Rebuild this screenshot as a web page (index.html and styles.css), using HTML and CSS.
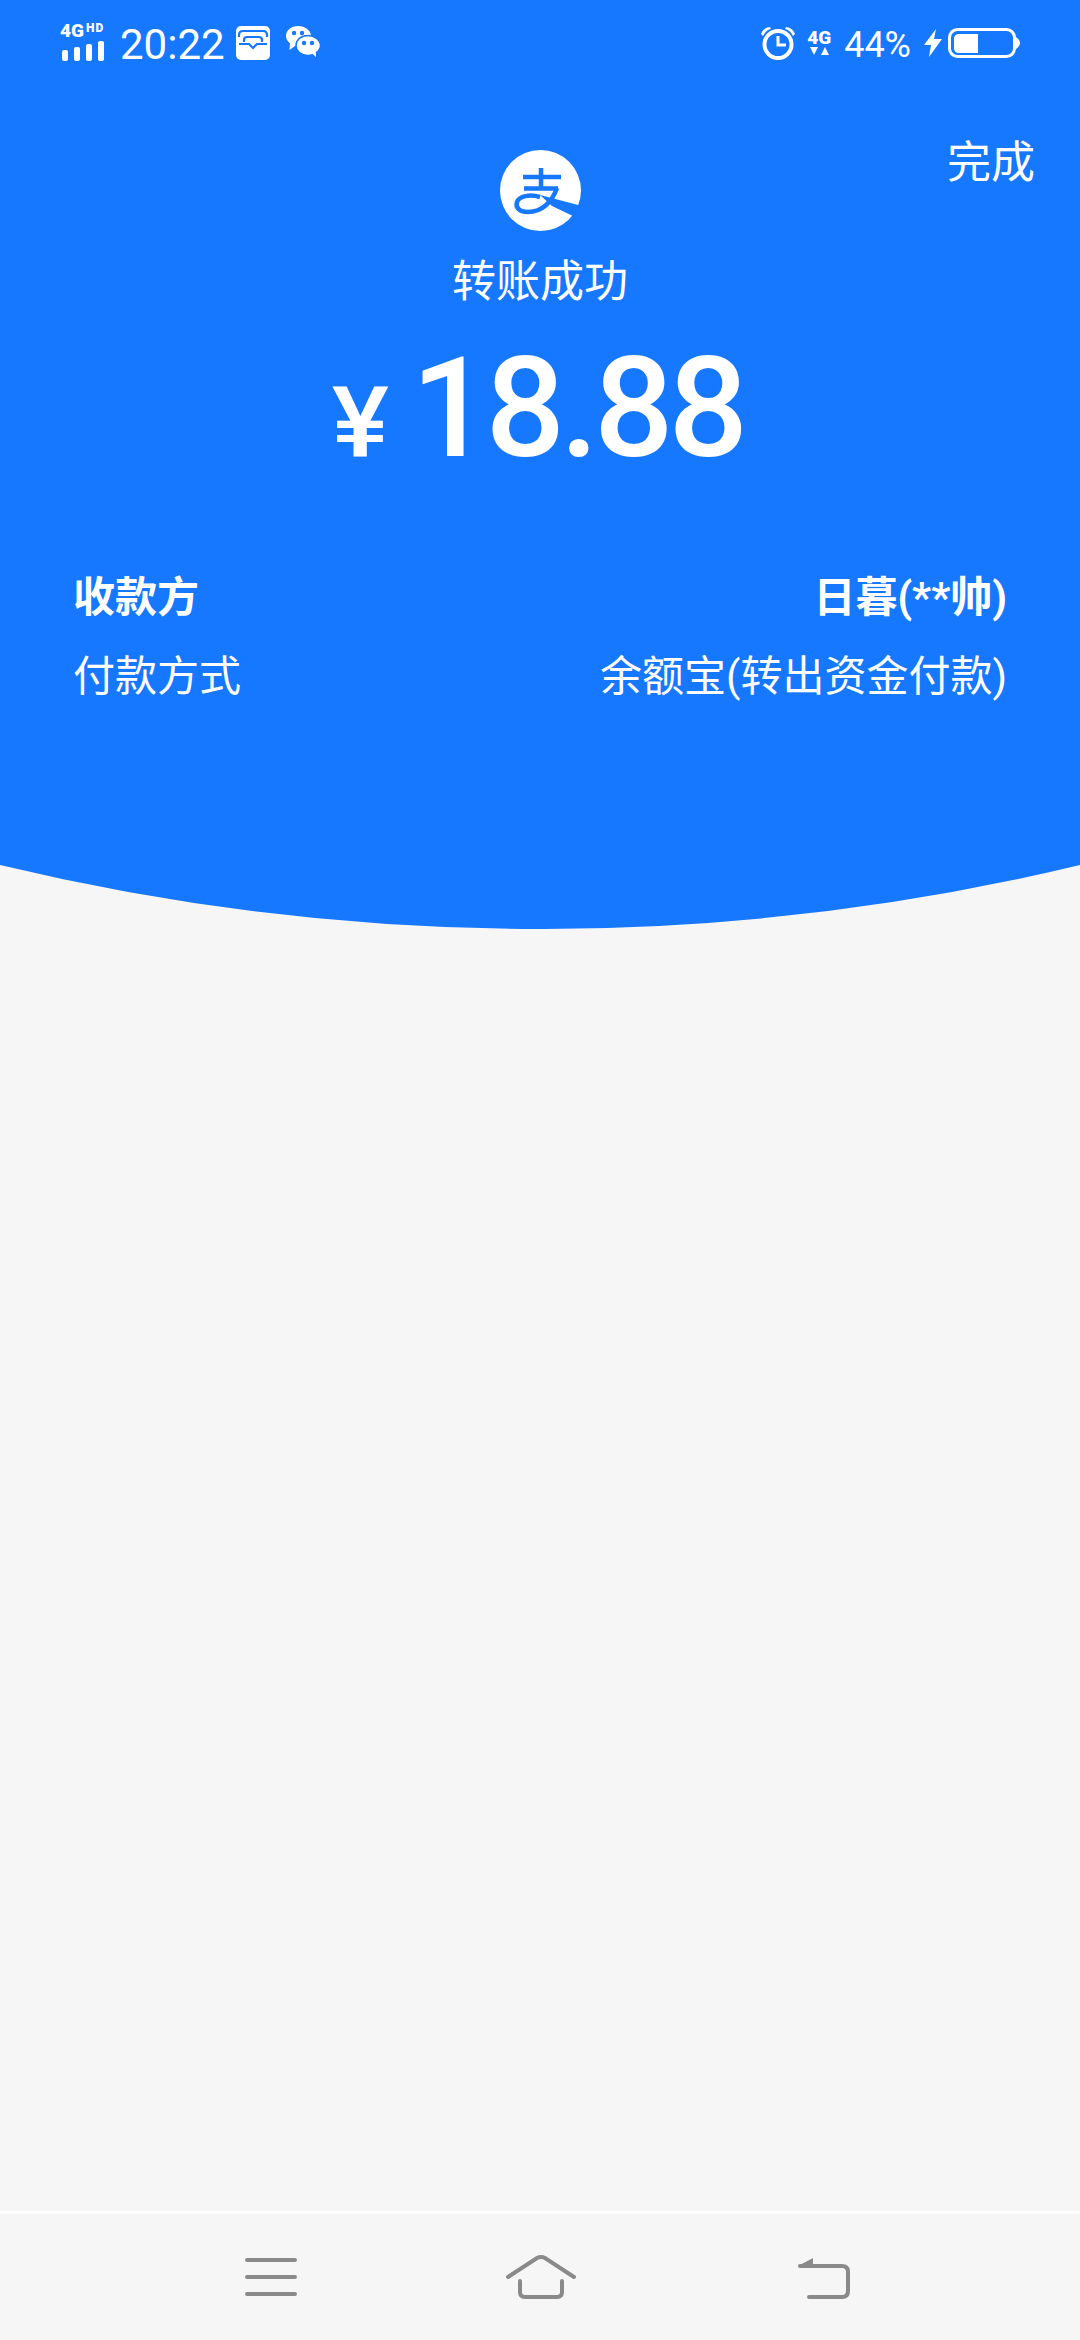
FILE: index.html
```html
<!DOCTYPE html>
<html lang="zh-CN">
<head>
    <meta charset="UTF-8">
    <meta name="viewport" content="width=device-width, initial-scale=1.0">
    <title>转账成功</title>
    <link rel="stylesheet" href="styles.css">
</head>
<body>
    <main class="page">
        <section class="hero">
            <div class="status-bar">
                <div class="signal">
                    <div class="sig-top"><span class="sig-4g">4G</span><span class="sig-hd">HD</span></div>
                    <svg viewBox="0 0 46 20" width="46" height="20">
                        <rect x="2" y="9" width="6" height="11" rx="2"/>
                        <rect x="14" y="6" width="6" height="14" rx="2"/>
                        <rect x="26" y="3" width="6" height="17" rx="2"/>
                        <rect x="38" y="0" width="6" height="20" rx="2"/>
                    </svg>
                </div>
                <span class="status-time">20:22</span>
                <svg class="ic-inbox" viewBox="0 0 34 34" width="34" height="34">
                    <rect width="34" height="34" rx="5" fill="#fff"/>
                    <path d="M3 11V9Q3 5 7 5H27Q31 5 31 9V11M8 16V14Q8 11 11 11H23Q26 11 26 14V16" fill="none" stroke="#1677ff" stroke-width="2.200"/>
                    <path d="M3 18H13L17 22L21 18H31" fill="none" stroke="#1677ff" stroke-width="2.200"/>
                </svg>
                <svg class="ic-wechat" viewBox="0 0 36 36" width="36" height="36">
                    <path d="M13 1C6 1 1 5.500 1 11C1 14 2.500 16.500 5 18.300L4.500 25L10 21C11 21.100 12 21.100 13 21.100C20 21.100 26 16.500 26 11C26 5.500 20 1 13 1Z" fill="#fff"/>
                    <path d="M23 10.500C16 10.500 11 15 11 20.500C11 26 16 30.500 23 30.500C24.500 30.500 26 30.200 27.500 29.800L32 34L31.500 27.500C34 25.500 35.500 23 35.500 20.500C35.500 15 29 10.500 23 10.500Z" fill="#fff" stroke="#1677ff" stroke-width="1.500"/>
                    <circle cx="9" cy="8" r="2.200" fill="#1677ff"/>
                    <circle cx="17" cy="8" r="2.200" fill="#1677ff"/>
                    <circle cx="19" cy="18" r="2.200" fill="#1677ff"/>
                    <circle cx="27" cy="18" r="2.200" fill="#1677ff"/>
                </svg>
                <span class="status-spacer"></span>
                <svg class="ic-alarm" viewBox="0 0 34 34" width="34" height="34">
                    <circle cx="17" cy="18.500" r="13.500" fill="none" stroke="#fff" stroke-width="4"/>
                    <path d="M17 10V19H25" fill="none" stroke="#fff" stroke-width="3"/>
                    <path d="M0 8Q2 2 9 1L10 3Q5 4 2 10ZM34 8Q32 2 25 1L24 3Q29 4 32 10Z" fill="#fff"/>
                </svg>
                <div class="net">
                    <span class="sig-4g">4G</span>
                    <svg viewBox="0 0 24 9" width="24" height="9">
                        <path d="M3 0H11L7 8ZM14 8H22L18 0Z" fill="#fff"/>
                    </svg>
                </div>
                <span class="status-batt">44%</span>
                <svg class="ic-bolt" viewBox="0 0 18 28" width="18" height="28">
                    <path d="M12 0L0 16H7L5 28L18 10H10Z" fill="#fff"/>
                </svg>
                <svg class="ic-battery" viewBox="0 0 72 30" width="72" height="30">
                    <rect x="1.500" y="1.500" width="65" height="27" rx="8" fill="none" stroke="#fff" stroke-width="3"/>
                    <path d="M6 11Q6 6 11 6H30V25H11Q6 25 6 20Z" fill="#fff"/>
                    <path d="M68 9Q72 12 72 15Q72 18 68 21Z" fill="#fff"/>
                </svg>
            </div>

            <div class="top-row">
                <span></span>
                <div class="result">
                    <svg class="logo" viewBox="0 0 81 81" width="81" height="81">
                        <circle cx="40.500" cy="40.500" r="40.500" fill="#fff"/>
                        <path d="M23 27H61M41 18V38M24 38.500H58" fill="none" stroke="#1677ff" stroke-width="4.500"/>
                        <path d="M57 38C52 52 42 62 28 62C20 62 15 58 17 52C19 46 30 44 40 47" fill="none" stroke="#1677ff" stroke-width="4.500"/>
                        <path d="M40 45L82 56L75 67L52 56Z" fill="#1677ff"/>
                    </svg>
                    <div class="result-title">转账成功</div>
                </div>
                <a class="done">完成</a>
            </div>

            <div class="amount"><span class="amount-sign">¥</span><span class="amount-num">18.88</span></div>

            <dl class="details">
                <div class="detail-row detail-strong">
                    <dt>收款方</dt>
                    <dd>日暮(**帅)</dd>
                </div>
                <div class="detail-row">
                    <dt>付款方式</dt>
                    <dd>余额宝(转出资金付款)</dd>
                </div>
            </dl>
        </section>
        <svg class="curve" viewBox="0 0 1080 64" width="1080" height="64">
            <path d="M0 0H1080A2310 2310 0 0 1 0 0Z" fill="#1677ff"/>
        </svg>
    </main>

    <nav class="nav-bar">
        <svg class="nav-menu" viewBox="0 0 54 42" width="54" height="42">
            <path d="M3 4H51M3 21H51M3 38H51"/>
        </svg>
        <svg class="nav-home" viewBox="0 0 72 46" width="72" height="46">
            <path d="M3 23L32 4Q36 2 40 4L69 23"/>
            <path d="M15 27V38Q15 43 20 43H52Q57 43 57 38V27"/>
        </svg>
        <svg class="nav-back" viewBox="0 0 56 44" width="56" height="44">
            <path d="M4 10H46Q52 10 52 16V35Q52 41 46 41H13"/>
            <path class="nav-arrow" d="M2 10L17 2V11Z"/>
        </svg>
    </nav>
</body>
</html>
```

FILE: styles.css
```css
* { box-sizing: border-box; }
html, body { margin: 0; padding: 0; }
body { width: 1080px; height: 2340px; display: flex; flex-direction: column; background-color: #f6f6f6; color: #fff; font-family: Roboto, "Noto Sans CJK SC", sans-serif; }
svg { display: block; flex: none; }

.page { flex: 1; }
.hero { height: 865px; background-color: #1677ff; overflow: hidden; }

/* status bar */
.status-bar { display: flex; align-items: center; height: 38px; margin-top: 24px; padding-left: 60px; fill: #fff; }
.signal { display: flex; flex-direction: column; width: 48px; margin-top: -2px; }
.signal svg { margin-top: 2px; }
.sig-top { display: flex; gap: 2px; height: 16px; align-items: flex-start; }
.sig-4g { font-size: 19px; font-weight: 900; line-height: 16px; }
.sig-hd { font-size: 12px; font-weight: 900; line-height: 10px; letter-spacing: 1px; }
.status-time { margin-left: 12px; font-size: 42px; line-height: 38px; padding-top: 4px; }
.ic-inbox { margin-left: 11px; }
.ic-wechat { margin-left: 15px; }
.status-spacer { flex: 1; }
.ic-alarm { margin-right: 12px; }
.net { display: flex; flex-direction: column; align-items: center; width: 24px; margin-right: 13px; }
.net svg { margin-top: 1px; }
.status-batt { font-size: 36px; line-height: 38px; margin-right: 13px; padding-top: 4px; }
.ic-bolt { margin-right: 6px; }
.ic-battery { margin-right: 60px; }

/* title */
.top-row { display: grid; grid-template-columns: 1fr auto 1fr; margin-top: 88px; }
.result { display: flex; flex-direction: column; align-items: center; }
.result-title { margin-top: 21px; font-size: 44px; line-height: 60px; }
.done { justify-self: end; margin: -17px 45px 0 0; font-size: 44px; line-height: 60px; }

/* amount */
.amount { display: flex; align-items: baseline; justify-content: center; margin-top: 21px; }
.amount-sign { font-size: 98px; font-weight: 500; margin-right: 22px; transform: scaleX(1.1); transform-origin: right; }
.amount-num { font-size: 140px; font-weight: 500; line-height: 150px; letter-spacing: -5px; }

/* rows */
.details { margin: 85px 0 0; padding: 0 73px; }
.detail-row { display: flex; justify-content: space-between; font-size: 42px; line-height: 60px; margin-bottom: 19px; }
.detail-row dt, .detail-row dd { margin: 0; }
.detail-strong { font-weight: 700; }

/* bottom nav */
.nav-bar { display: flex; align-items: flex-start; height: 129px; padding: 42px 0 0 244px; border-top: 3px solid #fff; background-color: #f6f6f6; }
.nav-bar path { fill: none; stroke: #8a8a8a; stroke-width: 4; stroke-linecap: round; }
.nav-bar .nav-arrow { fill: #8a8a8a; stroke: none; }
.nav-home { margin: -2px 0 0 207px; }
.nav-back { margin-left: 219px; }
```
